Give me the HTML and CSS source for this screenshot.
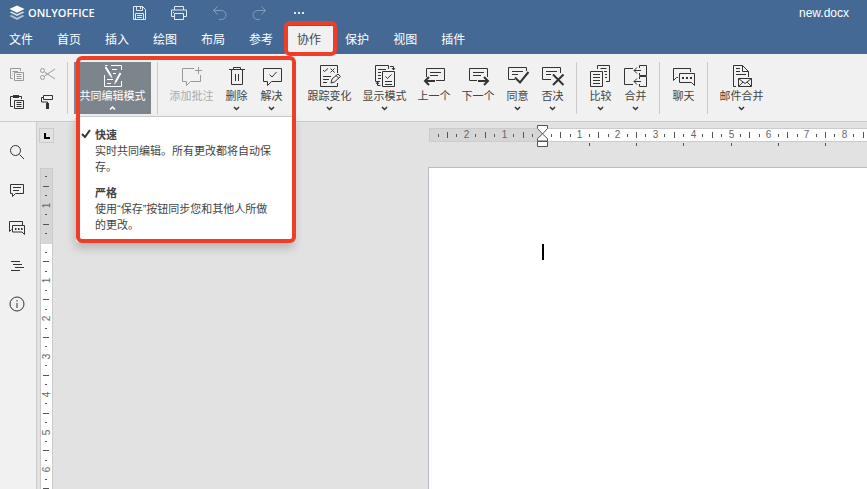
FILE: index.html
```html
<!DOCTYPE html>
<html lang="zh-CN">
<head>
<meta charset="utf-8">
<meta name="viewport" content="width=device-width, initial-scale=1">
<title>new.docx - ONLYOFFICE</title>
<link rel="stylesheet" href="styles.css">
</head>
<body>
<header class="header">
  <div class="titlebar">
    <div class="brand">
      <svg class="brand-mark" width="16" height="16" viewBox="0 0 16 16" aria-hidden="true">
        <path d="M8 .5 15.500 4 8 7.700.5 4z" fill="#fff"/>
        <path d="M.5 7.300 2.500 6.500 8 9.200l5.500-2.700 2 .8L8 11z" fill="#fff" opacity=".8"/>
        <path d="M.5 11 2.500 10 8 12.700 13.500 10l2 1L8 15z" fill="#fff" opacity=".6"/>
      </svg>
      <span class="brand-name">ONLYOFFICE</span>
    </div>
    <div class="quick">
      <button type="button" aria-label="保存"><svg width="16" height="16" viewBox="0 0 16 16"><path d="M2.500 1.500h9l3 3v10h-12zM5.500 1.500v4h6v-4M9.500 2v2M4.500 14.500v-6h8v6M6 10.500h5M6 12.500h5"/></svg></button>
      <button type="button" aria-label="打印"><svg width="18" height="16" viewBox="0 0 18 16"><path d="M4.500 5V1.500h9V5M4.500 11.500h-3v-6.500h15v6.500h-3M4.500 8.500h9v6h-9zM3 7.500h1"/></svg></button>
      <button type="button" aria-label="撤销" disabled><svg width="16" height="16" viewBox="0 0 16 16"><path d="M6.500 1.500 2.500 5.500l4 4M2.500 5.500h8a4.500 4.500 0 0 1 0 9H8"/></svg></button>
      <button type="button" aria-label="重做" disabled><svg width="16" height="16" viewBox="0 0 16 16"><path d="M10.500 1.500l4 4-4 4M14.500 5.500h-8a4.500 4.500 0 0 0 0 9H9"/></svg></button>
      <button type="button" aria-label="更多"><svg width="12" height="4" viewBox="0 0 12 4"><path class="fill" d="M1 1h2v2H1zM5 1h2v2H5zM9 1h2v2H9z"/></svg></button>
    </div>
    <span class="doc-name">new.docx</span>
  </div>
  <nav class="tabs">
    <a href="#">文件</a>
    <a href="#">首页</a>
    <a href="#">插入</a>
    <a href="#">绘图</a>
    <a href="#">布局</a>
    <a href="#">参考</a>
    <a href="#" class="active" aria-current="page">协作</a>
    <a href="#">保护</a>
    <a href="#">视图</a>
    <a href="#">插件</a>
  </nav>
</header>

<div class="toolbar" role="toolbar">
  <div class="clipboard">
    <button type="button" class="small" aria-label="复制" disabled><svg width="20" height="20" viewBox="0 0 20 20"><path d="M7 14.500H4.500v-10h10V7M6.500 7.500H12M6.500 9.500H7M6.500 11.500H7M8.500 8.500h9v8h-9zM10.500 10.500h5M10.500 12.500h5M10.500 14.500h5"/></svg></button>
    <button type="button" class="small" aria-label="剪切" disabled><svg width="20" height="20" viewBox="0 0 20 20"><path d="M19 5 8.500 12M19 15 8.500 8"/><circle cx="6.500" cy="6.500" r="2"/><circle cx="6.500" cy="13.500" r="2"/></svg></button>
    <button type="button" class="small" aria-label="粘贴"><svg width="20" height="20" viewBox="0 0 20 20"><path d="M7 14.500H4.500v-10h11V7M8.500 8.500h9v8h-9zM10.500 10.500h5M10.500 12.500h5M10.500 14.500h5"/><path class="fill" d="M7 3h6v3H7z"/></svg></button>
    <button type="button" class="small" aria-label="格式刷"><svg width="20" height="20" viewBox="0 0 20 20"><path d="M7.500 3.500h9v4h-9zM7.500 5.500h-2v4.500h6v2"/><path class="fill" d="M10 11h3v6h-3z"/></svg></button>
  </div>
  <span class="sep"></span>
  <div class="dropdown">
    <button type="button" class="tool pressed" aria-expanded="true">
      <svg width="27" height="24" viewBox="0 0 27 24"><path d="M6 1.500h2.500M12 1.500h10.500V6M13 5.500h5M14 9.500h3M5.500 11v11.500h17V17M8 15.500h6M8 19.500h4"/><path class="bold" d="M6.500 3 12 12M21.500 9 16.500 18"/><path d="M12 12l1 2M16.500 18l-1 2"/></svg>
      <span>共同编辑模式</span>
      <svg class="caret" width="7" height="6" viewBox="0 0 7 6"><path d="M1 4.500 3.500 2 6 4.500"/></svg>
    </button>
    <ul class="menu">
      <li><button type="button" class="menu-item">
        <svg class="check" width="10" height="10" viewBox="0 0 10 10"><path d="M1 5l3 3 5-7"/></svg>
        <strong>快速</strong>
        <span>实时共同编辑。所有更改都将自动保存。</span>
      </button></li>
      <li><button type="button" class="menu-item">
        <strong>严格</strong>
        <span>使用“保存”按钮同步您和其他人所做的更改。</span>
      </button></li>
    </ul>
    <span class="frame frame-menu"></span>
  </div>
  <span class="sep"></span>
  <button type="button" class="tool wide" disabled>
    <svg width="27" height="24" viewBox="0 0 27 24"><path d="M16 4.500H4.500v13h4v4l4-4h10V11M20.500 3v7M17 6.500h7"/></svg>
    <span>添加批注</span>
  </button>
  <button type="button" class="tool">
    <svg width="27" height="24" viewBox="0 0 27 24"><path d="M6 5.500h16M10.500 5V3.500h7V5M8.500 6v14.500h11V6M12.500 10v7M15.500 10v7"/></svg>
    <span>删除</span>
    <svg class="caret" width="7" height="6" viewBox="0 0 7 6"><path d="M1 2l2.500 2.500L6 2"/></svg>
  </button>
  <button type="button" class="tool">
    <svg width="27" height="24" viewBox="0 0 27 24"><path d="M5.500 4.500h18v13h-10l-4 4v-4h-4z"/><path class="mid" d="M11.500 10.500l2.500 2.500 4.500-5"/></svg>
    <span>解决</span>
    <svg class="caret" width="7" height="6" viewBox="0 0 7 6"><path d="M1 2l2.500 2.500L6 2"/></svg>
  </button>
  <span class="sep"></span>
  <button type="button" class="tool wide">
    <svg width="27" height="24" viewBox="0 0 27 24"><path d="M21.500 9V1.500h-17v21h17V19M7 6l1.500 1.500L12 4.500M14.500 4.500l4 4M18.500 4.500l-4 4M7 12.500h8M7 15.500h6M7 18.500h4M15 19l1-4 6-5 2.500 2.500-6 5.500zM20 11.500l2.500 2.500"/></svg>
    <span>跟踪变化</span>
    <svg class="caret" width="7" height="6" viewBox="0 0 7 6"><path d="M1 2l2.500 2.500L6 2"/></svg>
  </button>
  <button type="button" class="tool wide">
    <svg width="27" height="24" viewBox="0 0 27 24"><path d="M17.500 5V1.500h-13v16H9M7 5.500h8M7 8.500h3M7 11.500h3M7 14.500h3M11.500 7.500h12v15h-12zM14.500 12.500l2 2 4-4M14 17.500h7M14 20.500h7M19 2.500h3.500V6M21 4l1.500 2L24 4M9.500 21.500h-3V18M5 20l1.500-2L8 20"/></svg>
    <span>显示模式</span>
    <svg class="caret" width="7" height="6" viewBox="0 0 7 6"><path d="M1 2l2.500 2.500L6 2"/></svg>
  </button>
  <button type="button" class="tool medium">
    <svg width="27" height="24" viewBox="0 0 27 24"><path d="M5.500 13V4.500h18v12H15M9 8.500h11M9 11.500h8"/><path class="bold" d="M4.500 17H14M8 13l-4 4 4 4"/></svg>
    <span>上一个</span>
  </button>
  <button type="button" class="tool medium">
    <svg width="27" height="24" viewBox="0 0 27 24"><path d="M12 16.500H4.500v-12h18V13M8 8.500h11M8 11.500h8"/><path class="bold" d="M13 17h10M19 13l4 4-4 4"/></svg>
    <span>下一个</span>
  </button>
  <button type="button" class="tool">
    <svg width="27" height="24" viewBox="0 0 27 24"><path d="M11 15.500H4.500v-12h18V7M8 7.500h11M8 10.500h6"/><path class="bold" d="M11 13.500l5 5L24.500 8"/></svg>
    <span>同意</span>
    <svg class="caret" width="7" height="6" viewBox="0 0 7 6"><path d="M1 2l2.500 2.500L6 2"/></svg>
  </button>
  <button type="button" class="tool">
    <svg width="27" height="24" viewBox="0 0 27 24"><path d="M12 15.500H3.500v-12h18V9M7 7.500h11M7 10.500h5"/><path class="bold" d="M14 10.500 24.500 21M24.500 10.500 14 21"/></svg>
    <span>否决</span>
    <svg class="caret" width="7" height="6" viewBox="0 0 7 6"><path d="M1 2l2.500 2.500L6 2"/></svg>
  </button>
  <span class="sep"></span>
  <button type="button" class="tool">
    <svg width="27" height="24" viewBox="0 0 27 24"><path d="M10.500 5V1.500h12v16H19M13.500 4.500h6M17 7.500h3M18 10.500h2M18 13.500h2M3.500 7.500h12v15h-12zM6 10.500h7M6 13.500h7M6 16.500h7M6 19.500h7"/></svg>
    <span>比较</span>
    <svg class="caret" width="7" height="6" viewBox="0 0 7 6"><path d="M1 2l2.500 2.500L6 2"/></svg>
  </button>
  <button type="button" class="tool">
    <svg width="27" height="24" viewBox="0 0 27 24"><path d="M11 4.500H2.500v16H11M17.500 4V1.500h7v10h-7V9M17.500 15v-2.500h7v10h-7V20M12 6.500h7M15 3.500l-3 3 3 3M12 17.500h7M15 14.500l-3 3 3 3"/></svg>
    <span>合并</span>
    <svg class="caret" width="7" height="6" viewBox="0 0 7 6"><path d="M1 2l2.500 2.500L6 2"/></svg>
  </button>
  <span class="sep"></span>
  <button type="button" class="tool">
    <svg width="27" height="24" viewBox="0 0 27 24"><path d="M20.500 8V4.500h-17v12l3-3H8M9.500 9.500h15v12l-3-3h-12z"/><path class="fill" d="M12 13h2v2h-2zM16 13h2v2h-2zM20 13h2v2h-2z"/></svg>
    <span>聊天</span>
  </button>
  <span class="sep"></span>
  <button type="button" class="tool wide">
    <svg width="27" height="24" viewBox="0 0 27 24"><path d="M8 22.500H5.500v-21h9l6 6V13M14.500 1.500v6h6M8 4.500h4M8 7.500h4M8 10.500h10M10.500 14.500h13v8h-13zM10.500 14.500l6.500 5 6.500-5M11 22l4-4M23 22l-4-4"/></svg>
    <span>邮件合并</span>
    <svg class="caret" width="7" height="6" viewBox="0 0 7 6"><path d="M1 2l2.500 2.500L6 2"/></svg>
  </button>
</div>

<div class="workspace">
  <aside class="sidebar">
    <button type="button" aria-label="搜索"><svg width="18" height="18" viewBox="0 0 18 18"><circle cx="7.500" cy="7.500" r="5"/><path d="M11.500 11.500l4.500 4.500"/></svg></button>
    <button type="button" aria-label="批注"><svg width="18" height="18" viewBox="0 0 18 18"><path d="M2.500 3.500h13v9h-8l-3 3v-3h-2zM5 6.500h8M5 9.500h6"/></svg></button>
    <button type="button" aria-label="聊天"><svg width="18" height="18" viewBox="0 0 18 18"><path d="M14.500 6V2.500h-13v10l2-2M4.500 6.500h12v9l-2.500-2.500h-9.500z"/><path class="fill" d="M7 9h1.500v2H7zM10 9h1.500v2H10zM13 9h1.500v2H13z"/></svg></button>
    <button type="button" aria-label="导航"><svg width="18" height="18" viewBox="0 0 18 18"><path d="M3 4.500h9M5 7.500h9M7 10.500h9M3 13.500h9"/></svg></button>
    <button type="button" aria-label="关于"><svg width="18" height="18" viewBox="0 0 18 18"><circle cx="9" cy="9" r="7"/><path d="M9 8v5M9 5v1.500"/></svg></button>
  </aside>
  <main class="editor">
    <div class="ruler-row">
      <button type="button" class="corner" aria-label="制表符"><svg width="8" height="8" viewBox="0 0 8 8"><path class="fill" d="M1 1h2v4h4v2H1z"/></svg></button>
      <div class="hruler">
        <svg class="ruler" id="hruler"></svg>
        <svg class="stops" id="stops"></svg>
        <svg class="indent" width="11" height="22" viewBox="0 0 11 22"><path d="M.5.5h10v3l-5 5.500-5-5.500zM.5 16v-2.500l5-4.500 5 4.500V16zM.5 16.500h10v5H.5z"/></svg>
      </div>
    </div>
    <div class="page-row">
      <div class="vruler"><svg class="ruler" id="vruler"></svg></div>
      <article class="page"><span class="cursor"></span></article>
    </div>
  </main>
</div>
<script src="script.js"></script>
</body>
</html>
```
FILE: styles.css
```css
* { box-sizing: border-box; }

body {
  margin: 0;
  height: 100vh;
  display: flex;
  flex-direction: column;
  overflow: hidden;
  background: #e2e2e2;
  color: #444;
  font: 11px/16px "Liberation Sans", "Noto Sans CJK SC", sans-serif;
}

button {
  margin: 0;
  padding: 0;
  border: 0;
  background: none;
  color: inherit;
  font: inherit;
}

svg {
  display: block;
  flex: none;
  fill: none;
  stroke: #333;
}

svg .fill { fill: #333; stroke: none; }
svg .bold { stroke-width: 2; }

.header { flex: none; background: #446995; color: #fff; }

.titlebar { display: flex; align-items: center; height: 26px; }
.brand { display: flex; align-items: center; gap: 3px; width: 119px; padding-left: 9px; }
.brand-mark { stroke: none; }
.brand-name { font-family: "Open Sans", sans-serif; font-weight: 600; }

.quick { display: flex; flex: 1; }
.quick button { display: flex; align-items: center; justify-content: center; width: 40px; height: 26px; }
.quick svg { stroke: #e4eaf1; }
.quick .fill { fill: #e4eaf1; }
.quick button:disabled { opacity: .4; }
.doc-name { padding-right: 18px; font-size: 12px; }

.tabs { display: flex; height: 28px; margin-left: -3px; }
.tabs a {
  position: relative;
  padding: 0 12px;
  color: #fff;
  font-size: 12px;
  line-height: 29px;
  text-decoration: none;
}
.tabs .active { background: #f1f1f1; color: #444; }

.frame, .tabs .active::after {
  position: absolute;
  border: 4px solid #ef3e27;
  border-radius: 6px;
  pointer-events: none;
}
.tabs .active::after { content: ""; inset: -5px -4px -2px -1px; z-index: 3; }
.frame-menu { top: -6px; left: 2px; width: 220px; height: 187px; z-index: 3; }

.toolbar {
  flex: none;
  display: flex;
  height: 68px;
  padding: 8px 0 0 1px;
  border-bottom: 1px solid #cbcbcb;
  background: #f1f1f1;
}

.clipboard { display: grid; grid-template-columns: 30px 30px; grid-auto-rows: 28px; margin-top: -2px; }
.small { display: flex; align-items: center; justify-content: center; }
.sep { flex: none; width: 1px; height: 52px; margin: 0 6px; background: #cbcbcb; }

.tool {
  flex: none;
  display: flex;
  flex-direction: column;
  align-items: center;
  width: 35px;
  height: 52px;
  padding-top: 2px;
  white-space: nowrap;
}
.tool.medium { width: 44px; }
.tool.wide { width: 55px; }
.tool:disabled { color: #aaa; }
.tool:disabled svg, .small:disabled svg { stroke: #999; }
.tool.pressed { width: 77px; background: #7d858c; color: #fff; }
.pressed svg { stroke: #fff; }
.caret { margin-top: 1px; stroke-width: 1.5; }

.dropdown { position: relative; z-index: 2; }
.menu {
  position: absolute;
  top: 54px;
  left: 1px;
  width: 219px;
  margin: 0;
  padding: 10px 0 9px;
  list-style: none;
  border: 1px solid #cbcbcb;
  border-radius: 3px;
  background: #fff;
  box-shadow: 0 5px 10px rgba(0, 0, 0, .2);
}
.menu li + li { margin-top: 10px; }
.menu-item { position: relative; display: block; padding: 0 17px 0 19px; text-align: left; }
.menu-item strong, .menu-item span { display: block; }
.check { position: absolute; top: 2px; left: 5px; stroke-width: 2; }

.workspace { flex: 1; display: flex; min-height: 0; }

.sidebar {
  flex: none;
  display: flex;
  flex-direction: column;
  width: 37px;
  padding-top: 11px;
  border-right: 1px solid #cbcbcb;
  background: #f1f1f1;
}
.sidebar button { display: flex; align-items: center; justify-content: center; height: 38px; width: 34px; }

.editor { flex: 1; display: flex; flex-direction: column; min-width: 0; padding: 6px 0 0 2px; }
.ruler-row { display: flex; height: 39px; }
.corner {
  display: flex;
  align-items: center;
  justify-content: center;
  width: 15px;
  height: 15px;
  border: 1px solid #cbcbcb;
}
.corner .fill { fill: #000; }

.hruler {
  flex: 1;
  position: relative;
  height: 14px;
  margin-left: 375px;
  border: 1px solid #cbcbcb;
  border-right: 0;
  background: linear-gradient(to right, #d6d6d6 112px, #fff 112px);
}
.ruler { width: 100%; height: 100%; stroke: #555; shape-rendering: crispEdges; }
.ruler text { fill: #666; stroke: none; font-size: 10px; text-anchor: middle; }
.stops { position: absolute; top: 14px; left: 0; width: 100%; height: 4px; stroke: #555; shape-rendering: crispEdges; }
.indent { position: absolute; top: -4px; left: 107px; stroke: #555; fill: #fff; }

.page-row { flex: 1; display: flex; min-height: 0; }
.vruler {
  width: 13px;
  margin: 1px 0 0 1px;
  border: 1px solid #cbcbcb;
  border-bottom: 0;
  background: linear-gradient(#d6d6d6 75px, #fff 75px);
}
.page {
  flex: 1;
  margin-left: 375px;
  padding: 76px 0 0 113px;
  border: 1px solid #b8bcc4;
  border-width: 1px 0 0 1px;
  background: #fff;
}
.cursor { display: block; width: 2px; height: 16px; background: #000; }
```
FILE: script.js
```js
const CM = 37.8;
const NS = "http://www.w3.org/2000/svg";

// Draws quarter-centimetre ticks and centimetre numbers outward from the margin.
function drawRuler(svg, origin, length, vertical) {
  const mid = vertical ? 5 : 6;
  let d = "";
  const first = -Math.floor(origin / (CM / 4));
  for (let q = first; origin + q * CM / 4 < length; q++) {
    const p = Math.round(origin + q * CM / 4 - 0.5) + 0.5;
    if (q === 0 || p < 5) continue;
    if (q % 4 === 0) {
      const t = document.createElementNS(NS, "text");
      t.textContent = Math.abs(q / 4);
      if (vertical) {
        t.setAttribute("transform", `translate(9 ${p}) rotate(-90)`);
      } else {
        t.setAttribute("x", p);
        t.setAttribute("y", mid + 3);
      }
      svg.appendChild(t);
    } else {
      const h = q % 2 === 0 ? 3 : 1;
      d += vertical ? `M${mid - h} ${p}H${mid + h}` : `M${p} ${mid - h}V${mid + h + (h === 1 ? 1 : 0)}`;
    }
  }
  const path = document.createElementNS(NS, "path");
  path.setAttribute("d", d);
  svg.appendChild(path);
}

const h = document.getElementById("hruler");
const v = document.getElementById("vruler");
drawRuler(h, 112, h.clientWidth || h.getBoundingClientRect().width, false);
drawRuler(v, 74, v.clientHeight || v.getBoundingClientRect().height, true);

const stops = document.getElementById("stops");
const width = h.getBoundingClientRect().width;
let marks = "";
for (let x = 112 + CM * 1.25; x < width; x += CM * 1.25) {
  marks += `M${Math.floor(x) + 0.5} 0v3`;
}
const stopPath = document.createElementNS(NS, "path");
stopPath.setAttribute("d", marks);
stops.appendChild(stopPath);
```
